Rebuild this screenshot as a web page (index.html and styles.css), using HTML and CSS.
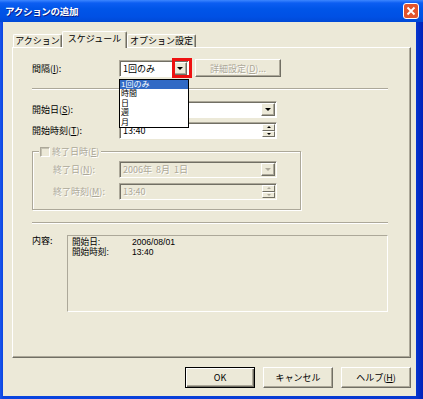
FILE: index.html
```html
<!DOCTYPE html>
<html lang="ja">
<head>
    <meta charset="UTF-8">
    <title>アクションの追加</title>
    <link rel="stylesheet" href="styles.css">
</head>
<body>
<div class="window">
    <div class="titlebar">
        <span class="title">アクションの追加</span>
        <span class="close-btn">
            <svg width="16" height="16" viewBox="0 0 16 16">
                <rect x="0.5" y="0.5" width="15" height="15" rx="2.5" fill="#e2542c" stroke="#fff"/>
                <path d="M4.5 4.5 L11.5 11.5 M11.5 4.5 L4.5 11.5" stroke="#fff" stroke-width="1.8"/>
            </svg>
        </span>
    </div>

    <div class="client">
        <div class="tabs">
            <div class="tab tab-action">アクション</div>
            <div class="tab tab-schedule active">スケジュール</div>
            <div class="tab tab-option">オプション設定</div>
        </div>

        <div class="panel">
            <!-- 間隔 -->
            <div class="row row-first">
                <span class="lbl">間隔(<u>I</u>):</span>
                <div class="field combo combo-short">
                    <span class="field-text">1回のみ</span>
                    <span class="drop-btn"></span>
                </div>
                <span class="btn btn-detail disabled">詳細設定(<u>D</u>)...</span>
            </div>

            <div class="sep"></div>

            <div class="row row-start">
                <span class="lbl">開始日(<u>S</u>):</span>
                <div class="field combo">
                    <span class="field-text"></span>
                    <span class="drop-btn"></span>
                </div>
            </div>
            <div class="row row-time">
                <span class="lbl">開始時刻(<u>T</u>):</span>
                <div class="field spin">
                    <span class="field-text">13:40</span>
                    <span class="spin-btns">
                        <span class="spin-up"></span>
                        <span class="spin-down"></span>
                    </span>
                </div>
            </div>

            <fieldset class="group">
                <legend class="group-title">
                    <span class="check"></span>
                    <span class="dim">終了日時(<u>E</u>)</span>
                </legend>
                <div class="row">
                    <span class="lbl lbl-sub dim">終了日(<u>N</u>):</span>
                    <div class="field combo off">
                        <span class="field-text dim">2006年&nbsp;&nbsp;8月&nbsp;&nbsp;1日</span>
                        <span class="drop-btn"></span>
                    </div>
                </div>
                <div class="row row-end-time">
                    <span class="lbl lbl-sub dim">終了時刻(<u>M</u>):</span>
                    <div class="field spin off">
                        <span class="field-text dim">13:40</span>
                        <span class="spin-btns">
                            <span class="spin-up"></span>
                            <span class="spin-down"></span>
                        </span>
                    </div>
                </div>
            </fieldset>

            <div class="sep sep-second"></div>

            <div class="row-summary">
                <span class="lbl lbl-summary">内容:</span>
                <div class="summary">
                    <div class="summary-line"><span class="summary-key">開始日:</span><span>2006/08/01</span></div>
                    <div class="summary-line"><span class="summary-key">開始時刻:</span><span>13:40</span></div>
                </div>
            </div>

            <!-- open dropdown and the marker around its button -->
            <ul class="droplist">
                <li class="selected">1回のみ</li>
                <li>時間</li>
                <li>日</li>
                <li>週</li>
                <li>月</li>
            </ul>
            <div class="marker"></div>
        </div>

        <div class="buttons">
            <span class="btn btn-default">OK</span>
            <span class="btn">キャンセル</span>
            <span class="btn">ヘルプ(<u>H</u>)</span>
        </div>
    </div>
</div>
</body>
</html>
```

FILE: styles.css
```css
body {
    margin: 0;
    width: 423px;
    height: 399px;
    overflow: hidden;
    font-family: "Noto Sans CJK JP", "Liberation Sans", sans-serif;
    font-size: 9px;
    color: #000;
}
u {
    text-decoration: underline;
}
.window {
    width: 423px;
    height: 399px;
    display: flex;
    flex-direction: column;
    background: linear-gradient(90deg, #1a55ec 0, #0a45e0 3px, #0636cf 416px, #0020b8 423px);
}
.titlebar {
    height: 22px;
    flex: none;
    display: flex;
    align-items: center;
    padding: 0 4px 0 5px;
    background: linear-gradient(#3d86ff 0, #0c5ef2 3px, #0055e8 9px, #0050e4 17px, #0049d6 22px);
}
.title {
    flex: 1;
    color: #fff;
    font-weight: bold;
    font-size: 9.5px;
    letter-spacing: -0.3px;
    text-shadow: 1px 1px #0a1e8a;
}
.close-btn {
    width: 16px;
    height: 16px;
    display: flex;
}
.client {
    flex: 1;
    margin: 0 7px 3px 3px;
    background: #ece9d8;
    padding: 9px 5px 0 9px;
}

/* tabs */
.tabs {
    display: flex;
    align-items: flex-end;
    height: 16px;
    padding-left: 1px;
    position: relative;
    z-index: 1;
}
.tab {
    box-sizing: border-box;
    height: 13px;
    line-height: 12px;
    text-align: center;
    background: #ece9d8;
    border-top: 1px solid #fff;
    border-left: 1px solid #fff;
    border-right: 1px solid #716f64;
    border-radius: 2px 2px 0 0;
    box-shadow: inset -1px 0 #aca899;
}
.tab-action {
    width: 49px;
}
.tab-schedule {
    width: 65px;
}
.tab-option {
    width: 69px;
}
.tab.active {
    height: 17px;
    margin-bottom: -1px;
    line-height: 14px;
}

/* panel */
.panel {
    position: relative;
    box-sizing: border-box;
    height: 311px;
    border: 1px solid;
    border-color: #fff #716f64 #716f64 #fff;
    box-shadow: inset -1px -1px #aca899;
    padding: 0 21px 0 19px;
}
.row {
    display: flex;
    align-items: center;
    height: 17px;
}
.row-first {
    margin-top: 12px;
}
.row-start {
    margin-top: 11px;
}
.row-time {
    margin-top: 4px;
}
.row-end-time {
    margin-top: 5px;
}
.lbl {
    width: 87px;
    flex: none;
    white-space: nowrap;
}
.lbl-sub {
    width: 66px;
}
.dim {
    color: #aca899;
    text-shadow: 1px 1px #fff;
}
.sep {
    width: 356px;
    height: 0;
    border-top: 1px solid #aca899;
    border-bottom: 1px solid #fff;
    margin-top: 11px;
}
.sep-second {
    margin-top: 12px;
}

/* fields */
.field {
    box-sizing: border-box;
    width: 158px;
    height: 17px;
    display: flex;
    align-items: stretch;
    background: #fff;
    border: 1px solid;
    border-color: #aca899 #fff #fff #aca899;
    box-shadow: inset 1px 1px #716f64;
    padding: 1px 1px 1px 1px;
}
.field.off {
    background: #ece9d8;
}
.combo-short {
    width: 70px;
}
.field-text {
    flex: 1;
    line-height: 13px;
    padding-left: 2px;
    white-space: nowrap;
}
.drop-btn {
    width: 14px;
    flex: none;
    box-sizing: border-box;
    background: #ece9d8;
    border: 1px solid;
    border-color: #fff #716f64 #716f64 #fff;
    box-shadow: inset -1px -1px #aca899;
    display: flex;
    align-items: center;
    justify-content: center;
}
.drop-btn::after {
    content: "";
    border-left: 3px solid transparent;
    border-right: 3px solid transparent;
    border-top: 3px solid #000;
}
.off .drop-btn::after {
    border-top-color: #aca899;
}
.spin-btns {
    width: 13px;
    flex: none;
    display: flex;
    flex-direction: column;
}
.spin-up,
.spin-down {
    flex: 1;
    box-sizing: border-box;
    background: #ece9d8;
    border: 1px solid;
    border-color: #fff #716f64 #716f64 #fff;
    display: flex;
    align-items: center;
    justify-content: center;
}
.spin-up::after {
    content: "";
    border-left: 2px solid transparent;
    border-right: 2px solid transparent;
    border-bottom: 2px solid #000;
}
.spin-down::after {
    content: "";
    border-left: 2px solid transparent;
    border-right: 2px solid transparent;
    border-top: 2px solid #000;
}
.off .spin-up::after {
    border-bottom-color: #aca899;
}
.off .spin-down::after {
    border-top-color: #aca899;
}

/* buttons */
.btn {
    box-sizing: border-box;
    width: 70px;
    height: 21px;
    display: flex;
    align-items: center;
    justify-content: center;
    background: #ece9d8;
    border: 1px solid;
    border-color: #fff #716f64 #716f64 #fff;
    box-shadow: inset -1px -1px #aca899;
    white-space: nowrap;
}
.btn-default {
    border: 1px solid #000;
    box-shadow: inset 1px 1px #fff, inset -1px -1px #716f64, inset -2px -2px #aca899;
}
.btn-detail {
    width: 86px;
    height: 18px;
    margin-left: 6px;
    margin-top: -1px;
}
.btn.disabled {
    color: #aca899;
    text-shadow: 1px 1px #fff;
}
.buttons {
    display: flex;
    justify-content: flex-end;
    gap: 8px;
    margin-top: 9px;
}

/* group box */
.group {
    box-sizing: border-box;
    width: 269px;
    margin: 7px 0 0 0;
    padding: 4px 0 9px 20px;
    border: 1px solid #aca899;
    box-shadow: inset 1px 1px #fff, 1px 1px #fff;
    min-width: 0;
}
.group-title {
    height: 11px;
    line-height: 11px;
    margin-left: -14px;
    padding: 0 2px 0 1px;
    display: flex;
    align-items: center;
    gap: 2px;
    background: #ece9d8;
}
.check {
    box-sizing: border-box;
    width: 10px;
    height: 10px;
    border: 1px solid;
    border-color: #aca899 #fff #fff #aca899;
    box-shadow: inset 1px 1px #c5c2b2;
}

/* summary */
.row-summary {
    display: flex;
    margin-top: 11px;
}
.lbl-summary {
    width: 35px;
    padding-top: 1px;
    line-height: 10px;
}
.summary {
    box-sizing: border-box;
    width: 321px;
    height: 77px;
    border: 1px solid;
    border-color: #aca899 #fff #fff #aca899;
    padding: 1px 0 0 4px;
    font-family: "Liberation Sans", "Noto Sans CJK JP", sans-serif;
    font-size: 8.6px;
}
.summary-line {
    display: flex;
    line-height: 10px;
}
.summary-key {
    width: 60px;
}

/* open dropdown */
.droplist {
    position: absolute;
    left: 106px;
    top: 31px;
    width: 70px;
    box-sizing: border-box;
    margin: 0;
    padding: 0;
    list-style: none;
    background: #fff;
    border: 1px solid #000;
    font-family: "Liberation Sans", "Noto Sans CJK JP", sans-serif;
    font-size: 8px;
}
.droplist li {
    height: 9.4px;
    line-height: 9.4px;
    padding-left: 1px;
    overflow: hidden;
}
.droplist li.selected {
    background: #316ac5;
    color: #fff;
}
.marker {
    position: absolute;
    left: 159px;
    top: 10px;
    width: 20px;
    height: 20px;
    box-sizing: border-box;
    border: 3px solid #ee1111;
}
```
